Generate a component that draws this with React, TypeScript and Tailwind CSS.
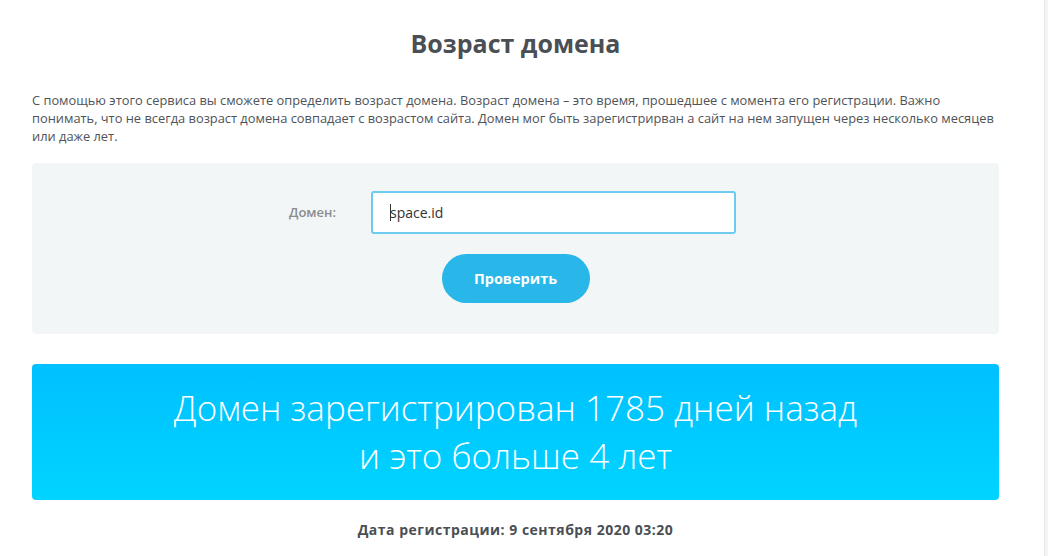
import React from "react";

const FONT = { fontFamily: '"Open Sans", "Noto Sans", Arial, sans-serif' };

export default function App() {
  return (
    <div className="flex min-h-[556px] bg-[#f4f4f4]" style={FONT}>
      <div className="w-[1045px] shrink-0 border-r border-[#e6e6e6] bg-white px-8 pb-6">
        <div className="w-[967px]">
          <h1 className="pt-[28px] text-center text-[25px] leading-[30px] font-bold text-[#4a4f55]">
            Возраст домена
          </h1>
          <p className="mt-[33px] text-[12.85px] leading-[18px] whitespace-nowrap text-[#4f5358]">
            С помощью этого сервиса вы сможете определить возраст домена. Возраст домена – это время, прошедшее с момента его регистрации. Важно
            <br />
            понимать, что не всегда возраст домена совпадает с возрастом сайта. Домен мог быть зарегистрирван а сайт на нем запущен через несколько месяцев
            <br />
            или даже лет.
          </p>

          <div className="mt-[18px] flex h-[171px] flex-col items-center rounded-[4px] bg-[#f3f6f7] pt-[28px]">
            <div className="flex items-center pr-[6px]">
              <label className="w-[82px] text-[13px] font-semibold text-[#8c8c8c]">Домен:</label>
              <div className="relative">
                <input
                  defaultValue="space.id"
                  className="h-[43px] w-[365px] rounded-[3px] border-2 border-[#6ccbef] bg-white px-[17px] text-[14px] text-[#333] outline-none"
                />
                <span className="absolute top-[13px] left-[19px] h-[17px] w-px bg-[#333]" />
              </div>
            </div>
            <button className="mt-[20px] h-[49px] w-[148px] rounded-full bg-[#29b6e8] text-[14.5px] font-bold text-white">
              Проверить
            </button>
          </div>

          <div className="mt-[30px] flex h-[136px] flex-col items-center justify-center rounded-[4px] bg-gradient-to-b from-[#00c0ff] to-[#00d4ff] text-center text-[35px] leading-[48px] font-light text-white">
            <div>Домен зарегистрирован 1785 дней назад</div>
            <div>и это больше 4 лет</div>
          </div>

          <div className="mt-[19px] text-center text-[14px] tracking-[0.5px] font-bold text-[#4a4f55]">
            Дата регистрации: 9 сентября 2020 03:20
          </div>
        </div>
      </div>
    </div>
  );
}
